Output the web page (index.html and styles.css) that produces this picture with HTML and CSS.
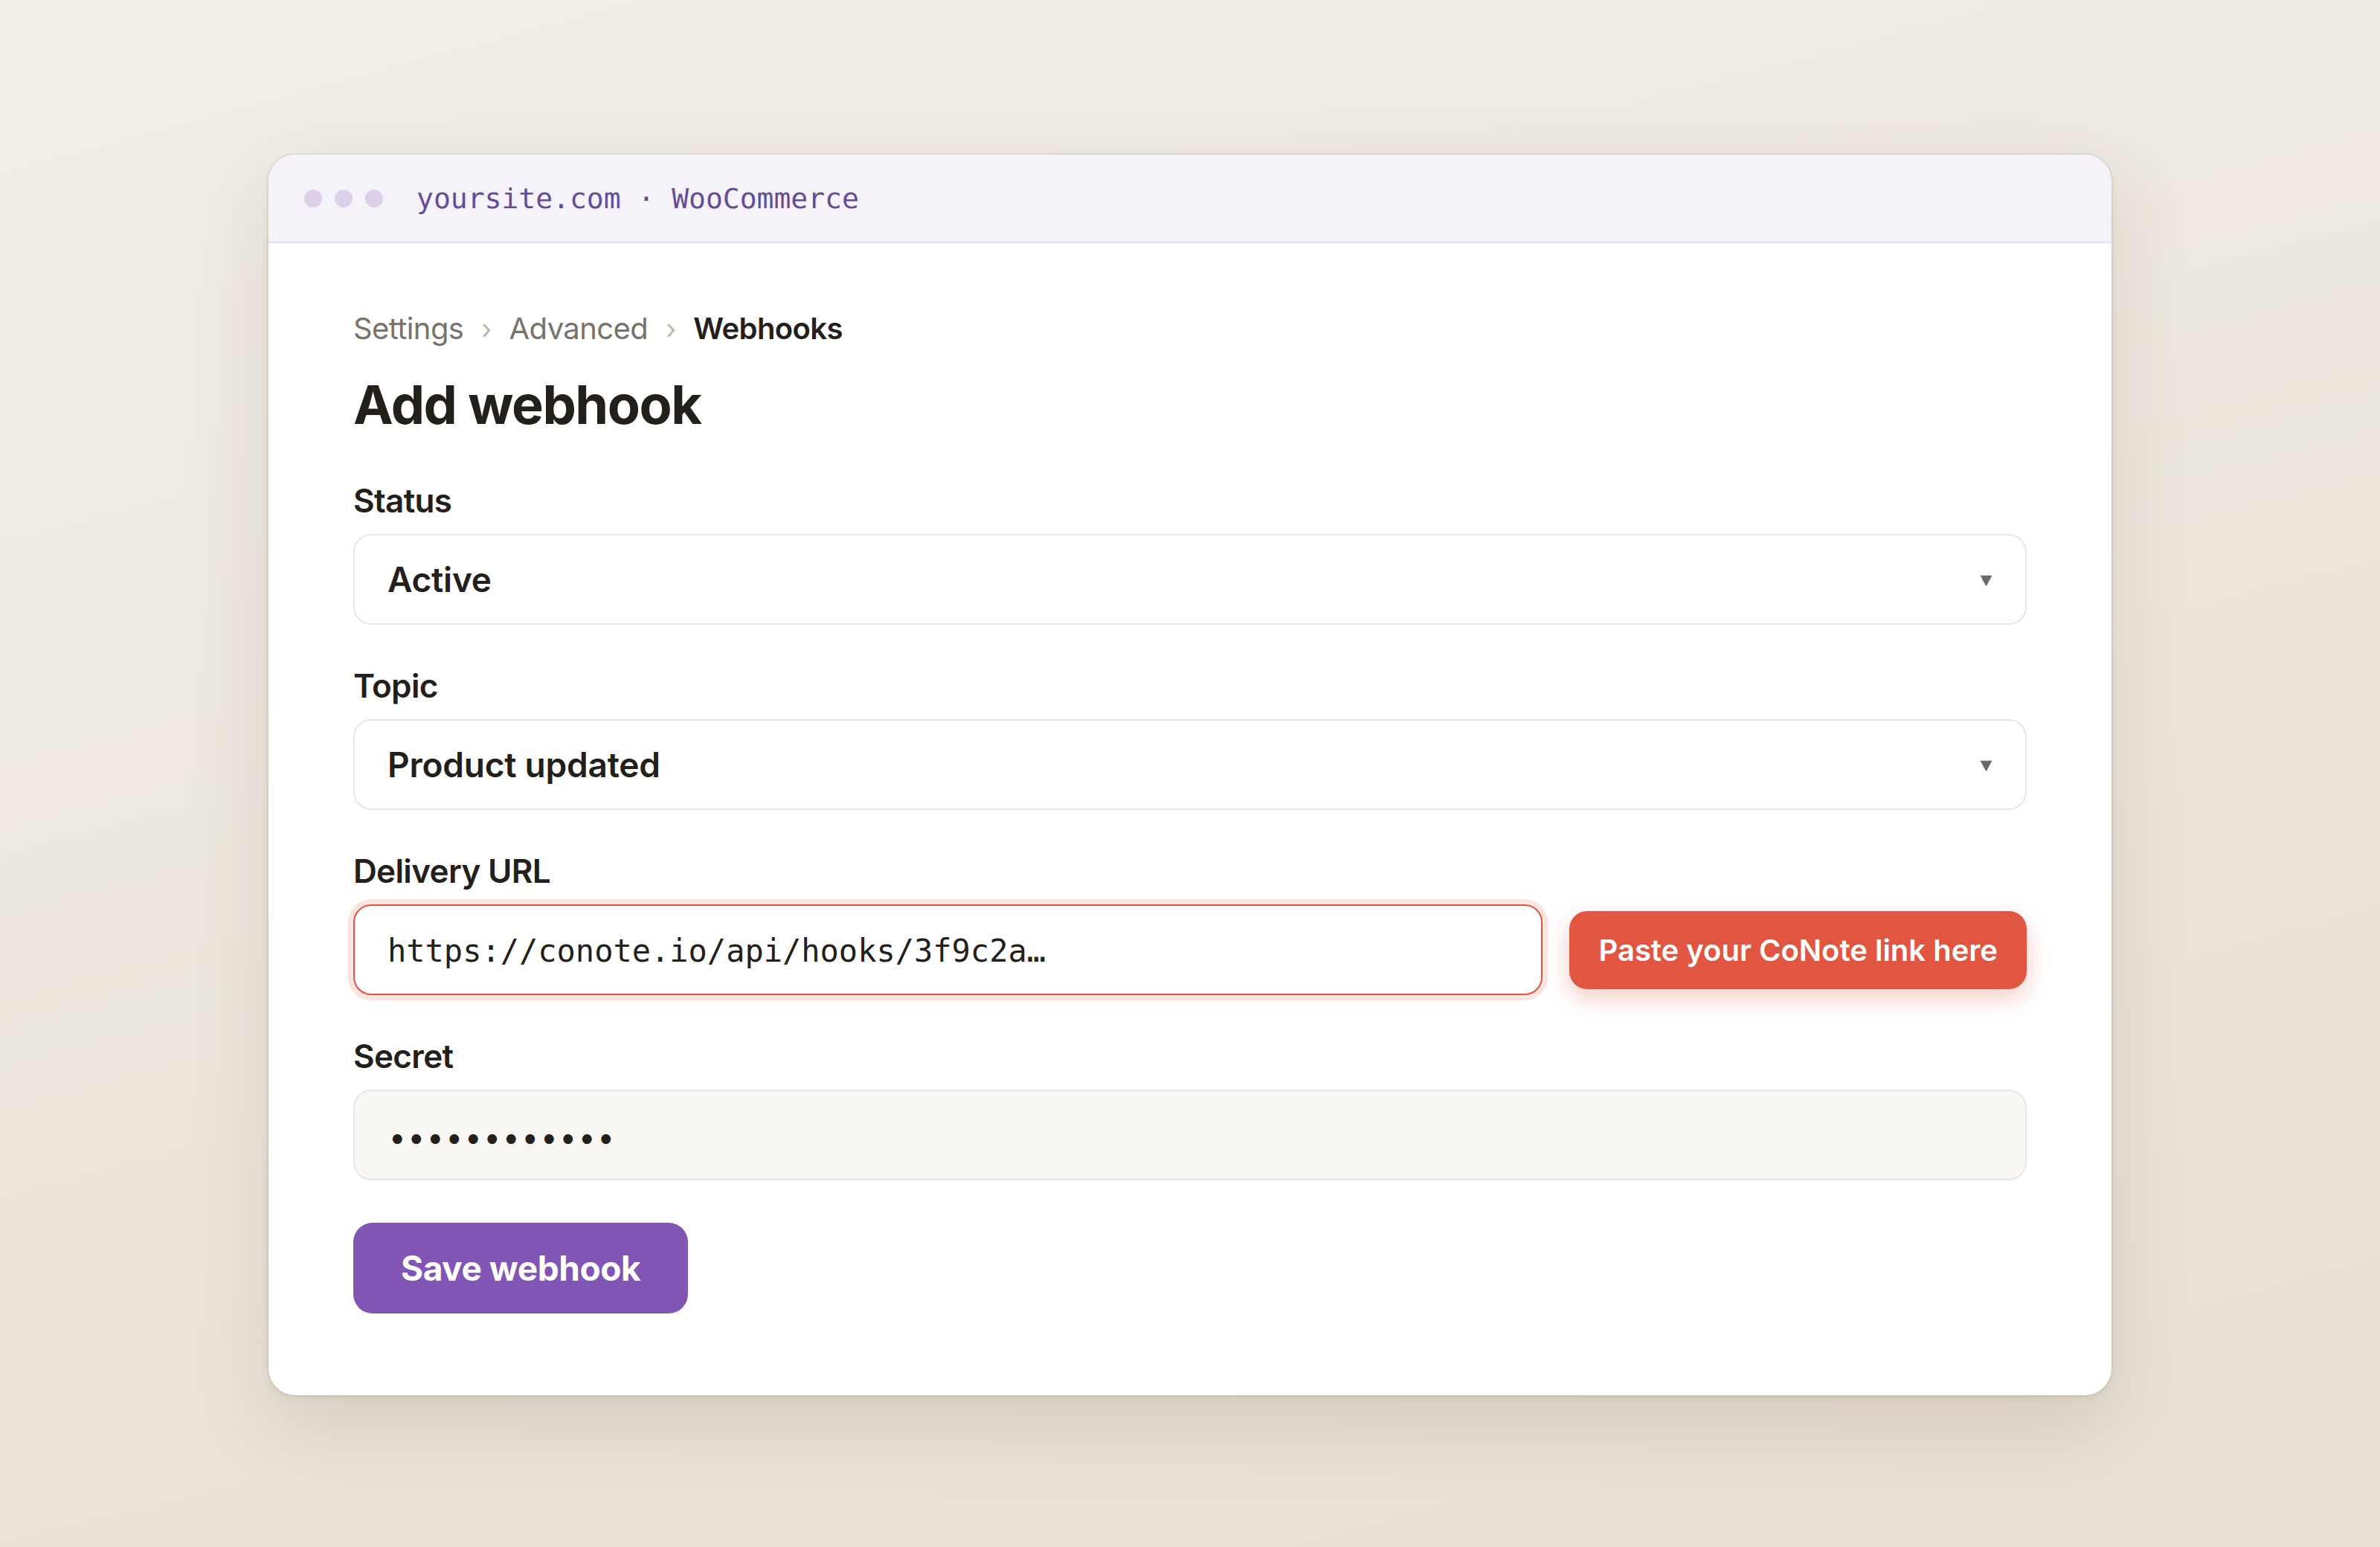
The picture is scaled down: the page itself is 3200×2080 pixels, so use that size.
FILE: index.html
```html
<!DOCTYPE html>
<html lang="en">
<head>
<meta charset="utf-8">
<title>Add webhook</title>
<link rel="stylesheet" href="styles.css">
</head>
<body>
<div class="window">
  <div class="titlebar">
    <div class="dots"><span class="dot"></span><span class="dot"></span><span class="dot"></span></div>
    <div class="address">yoursite.com · WooCommerce</div>
  </div>
  <div class="content">
    <nav class="crumbs">
      <span class="crumb">Settings</span>
      <span class="sep">›</span>
      <span class="crumb">Advanced</span>
      <span class="sep">›</span>
      <span class="crumb current">Webhooks</span>
    </nav>
    <h1 class="title">Add webhook</h1>

    <div class="field">
      <div class="label">Status</div>
      <div class="select">
        <span class="select-value">Active</span>
        <svg class="caret" viewBox="0 0 14 14" width="17" height="17"><path d="M0.5 1.5 H13.5 L7.6 12.6 Q7 13.4 6.4 12.6 Z" fill="#6e6a63"/></svg>
      </div>
    </div>

    <div class="field">
      <div class="label">Topic</div>
      <div class="select">
        <span class="select-value">Product updated</span>
        <svg class="caret" viewBox="0 0 14 14" width="17" height="17"><path d="M0.5 1.5 H13.5 L7.6 12.6 Q7 13.4 6.4 12.6 Z" fill="#6e6a63"/></svg>
      </div>
    </div>

    <div class="field">
      <div class="label">Delivery URL</div>
      <div class="url-row">
        <div class="input url-input"><span class="mono">https://conote.io/api/hooks/3f9c2a…</span></div>
        <button class="paste-btn">Paste your CoNote link here</button>
      </div>
    </div>

    <div class="field">
      <div class="label">Secret</div>
      <div class="input secret-input"><span class="mono dots-text">••••••••••••</span></div>
    </div>

    <button class="save-btn">Save webhook</button>
  </div>
</div>
</body>
</html>
```

FILE: styles.css
```css
* { box-sizing: border-box; }
html, body { margin: 0; padding: 0; }
body {
  min-height: 100vh;
  display: flex;
  align-items: center;
  justify-content: center;
  padding-top: 4px;
  background: linear-gradient(165deg, #f2eee8 0%, #ece6dd 55%, #e8e0d5 100%);
  font-family: Inter, "Noto Sans", sans-serif;
  color: #23201c;
}
.window {
  width: 2478px;
  background: #ffffff;
  border-radius: 36px;
  overflow: hidden;
  box-shadow: 0 0 0 2px rgba(140, 120, 95, 0.10), 0 4px 10px rgba(90, 70, 45, 0.08), 0 40px 110px rgba(90, 70, 45, 0.14);
}
.titlebar {
  height: 119px;
  background: #f5f2fa;
  border-bottom: 2px solid #e6deef;
  display: flex;
  align-items: center;
  padding-left: 48px;
}
.dots { display: flex; gap: 17px; }
.dot {
  width: 24px;
  height: 24px;
  border-radius: 50%;
  background: #dcd0ea;
}
.address {
  margin-left: 45px;
  font-family: "DejaVu Sans Mono", "Liberation Mono", monospace;
  font-size: 38px;
  color: #654c98;
  white-space: pre;
}
.content {
  padding: 91px 114px 110px;
}
.crumbs {
  display: flex;
  align-items: center;
  gap: 24px;
  font-size: 40px;
  line-height: 48px;
  letter-spacing: -0.015em;
  color: #78726a;
}
.sep { color: #bdb5aa; font-size: 36px; }
.current { color: #23201c; font-weight: 600; }
.title {
  margin: 35px 0 60px;
  font-size: 72px;
  line-height: 86px;
  font-weight: 700;
  letter-spacing: -0.02em;
}
.field { margin-bottom: 56px; }
.label {
  font-size: 44px;
  line-height: 53px;
  font-weight: 600;
  letter-spacing: -0.015em;
  margin-bottom: 18px;
}
.select, .input {
  height: 122px;
  border: 2px solid #ebe6df;
  border-radius: 24px;
  display: flex;
  align-items: center;
  padding: 0 44px 0 44px;
  background: #ffffff;
}
.select { justify-content: space-between; }
.select-value { font-size: 46px; font-weight: 600; letter-spacing: -0.005em; }
.caret { display: block; margin-top: 3px; }
.url-row {
  display: flex;
  align-items: center;
  gap: 36px;
}
.url-input {
  flex: 1;
  border-color: #e0543f;
  box-shadow: 0 0 0 7px #fce4df;
}
.mono {
  font-family: "DejaVu Sans Mono", "Liberation Mono", monospace;
  font-size: 42px;
  color: #23201c;
}
.url-input .mono { padding-top: 2px; }
.paste-btn {
  height: 105px;
  padding: 0 39px;
  border: none;
  border-radius: 24px;
  background: #e05641;
  color: #ffffff;
  font-family: Inter, "Noto Sans", sans-serif;
  font-size: 40px;
  font-weight: 600;
  box-shadow: 0 12px 30px rgba(224, 86, 65, 0.30);
  white-space: nowrap;
}
.secret-input { background: #f9f7f4; }
.dots-text { padding-top: 12px; font-size: 44px; letter-spacing: -1px; }
.save-btn {
  margin-top: 1px;
  height: 122px;
  padding: 0 64px;
  border: none;
  border-radius: 26px;
  background: #8155b3;
  color: #ffffff;
  font-family: Inter, "Noto Sans", sans-serif;
  font-size: 46px;
  font-weight: 700;
  letter-spacing: -0.01em;
}
```
